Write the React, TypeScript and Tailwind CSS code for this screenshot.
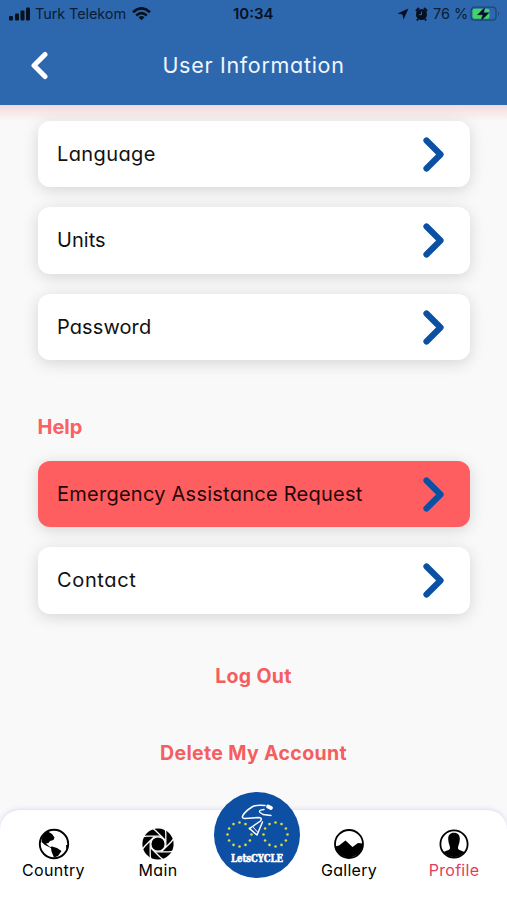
import clsx from 'clsx'
import type { ReactNode } from 'react'

const DOTS = Array.from({ length: 12 }, (_, i) => (i * Math.PI) / 6)
const BLADES = [0, 45, 90, 135, 180, 225, 270, 315]

function StatusBar() {
  return (
    <div className="flex h-7 items-center font-['Inter',sans-serif] text-[14.5px] text-[#0a1c36] [font-feature-settings:normal]">
      <svg className="ml-[9px] shrink-0" width="22" height="14" viewBox="0 0 22 14" fill="#07101f">
        <rect x="0" y="9" width="4" height="4.5" rx="1" />
        <rect x="6" y="6.5" width="4" height="7" rx="1" />
        <rect x="11.5" y="3.5" width="4" height="10" rx="1" />
        <rect x="17" y="0.5" width="4" height="13" rx="1" />
      </svg>
      <span className="ml-[4px] w-[92px] shrink-0 tracking-[-0.1px] whitespace-nowrap">Turk Telekom</span>
      <svg className="ml-[5px] shrink-0" width="19" height="14" viewBox="0 0 19 14" fill="none" stroke="#07101f" strokeWidth="2.6">
        <path d="M1 5.2Q9.5 -2.6 18 5.2" />
        <path d="M4.2 8.5Q9.5 3.8 14.8 8.5" />
        <path d="M6.5 10.2Q9.5 7.7 12.5 10.2L9.5 13.3Z" fill="#07101f" stroke="none" />
      </svg>
      <span className="ml-[82px] w-[41px] shrink-0 text-[15px] font-semibold whitespace-nowrap text-[#07101f]">10:34</span>
      <svg className="ml-[123px] shrink-0" width="12" height="12" viewBox="0 0 12 12" fill="#07101f">
        <path d="M11.5 0.5 6.5 11.5 5.5 6.5 0.5 5.5Z" />
      </svg>
      <svg className="ml-[6px] shrink-0" width="13" height="14" viewBox="0 0 13 14">
        <circle cx="6.5" cy="7.5" r="5.5" fill="#07101f" />
        <path d="M1 4 4 1M12 4 9 1M3 12 2 13.5M10 12l1 1.5" stroke="#07101f" strokeWidth="2" />
        <path d="M6.5 4.5v3.2H4" fill="none" stroke="#2d68ae" />
      </svg>
      <span className="ml-[5px] w-[37px] shrink-0 whitespace-nowrap">76 %</span>
      <svg className="shrink-0" width="30" height="16" viewBox="0 0 30 16">
        <rect x="1" y="1.2" width="25" height="13" rx="3.5" fill="none" stroke="#1d4676" strokeWidth="1.2" />
        <rect x="2.5" y="2.8" width="17" height="10" rx="2" fill="#42d564" />
        <path d="M28 5.5v4.5q2-2.2 0-4.5Z" fill="#1d4676" />
        <path d="M15.5 0.5 7 9h5.5L10.5 15.5 19.5 6.5h-5.7Z" fill="#07101f" stroke="#2d68ae" strokeWidth="0.5" />
      </svg>
    </div>
  )
}

function Row({ label, labelClass, danger }: { label: string; labelClass: string; danger?: boolean }) {
  return (
    <button
      type="button"
      className={clsx(
        'flex h-[66.5px] w-full items-center justify-between rounded-[12px] pr-[26px] pl-[19.5px] shadow-[0_3px_16px_rgba(0,0,0,0.15)]',
        danger ? 'bg-[#ff5e60]' : 'bg-white',
      )}
    >
      <span className={clsx('text-[20px] whitespace-nowrap', danger ? 'text-[#250608]' : 'text-[#111]', labelClass)}>
        {label}
      </span>
      <svg width="22" height="36" viewBox="0 0 22 36" fill="none" stroke="#0b50a3" strokeWidth="6.2" strokeLinecap="round" strokeLinejoin="round">
        <path d="M4.5 4.5 18.5 18.5 4.5 32.5" />
      </svg>
    </button>
  )
}

function GlobeIcon() {
  return (
    <svg width="32" height="32" viewBox="0 0 32 32">
      <circle cx="16" cy="16" r="14.2" fill="white" stroke="black" strokeWidth="1.9" />
      <path d="M4 10Q6 5 10 3.5L14 6 16.5 9.5 15.500 12 12 13 10.500 15 8 15.500 12 19 14 18.500 19 20 23.500 23 20 28 16 29.500 13.500 23.500 13 20 7 17 3.500 14Z" />
      <path d="M28 17 28.5 22 30.5 17Z" />
    </svg>
  )
}

function ApertureIcon() {
  return (
    <svg width="32" height="32" viewBox="-16 -16 32 32">
      <circle r="15.6" />
      {BLADES.map((a) => (
        <path key={a} d="M3.2 -7.8H-11L-17 -7" transform={`rotate(${a})`} fill="none" stroke="white" strokeWidth="1.3" />
      ))}
      <circle r="7.2" stroke="white" strokeWidth="1.3" />
    </svg>
  )
}

function GalleryIcon() {
  return (
    <svg width="32" height="32" viewBox="0 0 32 32">
      <circle cx="16" cy="16" r="14" fill="white" stroke="black" strokeWidth="1.8" />
      <path d="M2 18.5 6 17.5 12.5 12.5 19.5 19 25 15 30 15.5A14.2 14.2 0 0 1 2 18.5Z" />
    </svg>
  )
}

function ProfileIcon() {
  return (
    <svg width="32" height="32" viewBox="0 0 32 32">
      <circle cx="16" cy="16" r="13.6" fill="white" stroke="black" strokeWidth="1.8" />
      <path
        className="text-black"
        fill="currentColor"
        d="M16 4.8c-4.500 0-6.200 3.200-5.700 7.200 0 3.500 1.700 5 1.700 8 0 2-3 2.500-6.500 4A13.500 13.500 0 0 0 26.500 24c-3.500-1.500-6.500-2-6.500-4 0-3 1.700-4.500 1.700-8 .5-4-1.200-7.200-5.700-7.200Z"
      />
    </svg>
  )
}

function Logo() {
  return (
    <svg width="86" height="86" viewBox="0 0 86 86">
      <circle cx="43" cy="43" r="43" fill="#0c4fa3" />
      {[25.5, 61.5].map((cx) =>
        DOTS.map((a) => (
          <circle key={`${cx}-${a}`} cx={cx + Math.sin(a) * 12} cy={42.5 - Math.cos(a) * 12} r="1.3" fill="#d9d94a" />
        )),
      )}
      {/* rider */}
      <g fill="none" stroke="white" strokeLinecap="round" strokeLinejoin="round">
        <path d="M51 13.5Q42 12.500 38 15 30 20 28.5 24.500 28 26.500 31 26.500L44 25.500Q49 25.500 46.500 29L35.500 36.500 43 43 48.500 30" strokeWidth="1.5" />
        <path d="M50 17.5Q44 18 46 20.500L49 22.500 57 23.500" strokeWidth="1.3" />
        <path d="M39 35 43.5 40" strokeWidth="1" />
        <path d="M54 14.5 57 16" strokeWidth="3.8" />
      </g>
      <text
        x="17"
        y="70"
        textLength="52"
        lengthAdjust="spacingAndGlyphs"
        fill="white"
        stroke="white"
        strokeWidth="0.6"
        fontSize="11.5"
        fontWeight="700"
        fontFamily="DejaVu Serif, serif"
      >
        LetsCYCLE
      </text>
    </svg>
  )
}

function Tab({ label, icon, className }: { label: string; icon: ReactNode; className: string }) {
  return (
    <button type="button" className={clsx('flex shrink-0 flex-col items-center pt-[18px]', className)}>
      {icon}
      <span className="text-[16px] leading-5 tracking-[0.3px] whitespace-nowrap">{label}</span>
    </button>
  )
}

export default function App() {
  return (
    <div className="flex h-[900px] w-[507px] flex-col overflow-hidden bg-[#f9f9f9] font-['Inter',sans-serif] [font-feature-settings:'cv11']">
      <header className="h-[104.5px] bg-[#2d68ae]">
        <StatusBar />
        <div className="grid h-[74px] grid-cols-[1fr_auto_1fr] items-center">
          <button type="button" className="ml-[29px] w-5">
            <svg width="20" height="30" viewBox="0 0 20 30" fill="none" stroke="white" strokeWidth="5" strokeLinecap="round" strokeLinejoin="round">
              <path d="M16 4.5 5 15.5 16 26.5" />
            </svg>
          </button>
          <h1 className="text-[21.5px] tracking-[0.7px] text-[#f0f6ff]">User Information</h1>
        </div>
      </header>

      <main className="h-[705.5px] shrink-0">
        <div className="h-[16px] bg-linear-to-b from-[#f4d9da] via-[#f7eaea] to-[#f9f8f8]" />
        <div className="flex flex-col gap-[20px] px-[37.5px]">
          <Row label="Language" labelClass="tracking-[0.4px]" />
          <Row label="Units" labelClass="tracking-[0.05px]" />
          <Row label="Password" labelClass="tracking-[0.1px]" />
        </div>
        <h2 className="mt-[54px] ml-[37.5px] h-[46.5px] text-[20px] leading-[27px] font-bold text-[#fa6064]">Help</h2>
        <div className="flex flex-col gap-[20px] px-[37.5px]">
          <Row label="Emergency Assistance Request" labelClass="tracking-[0.25px]" danger />
          <Row label="Contact" labelClass="tracking-[0.65px]" />
        </div>
        <div className="mt-[48px] flex flex-col items-center gap-[49px] text-[19.5px] leading-7 font-bold tracking-[0.35px] text-[#f45e60]">
          <button type="button">Log Out</button>
          <button type="button">Delete My Account</button>
        </div>
      </main>

      <nav className="flex h-[90px] shrink-0 rounded-t-[20px] bg-white shadow-[0_-1px_5px_rgba(120,120,220,0.22)]">
        <Tab label="Country" icon={<GlobeIcon />} className="w-[107px]" />
        <Tab label="Main" icon={<ApertureIcon />} className="w-[102px]" />
        <button type="button" className="mx-[5px] -mt-[18px] h-[86px] w-[86px] shrink-0">
          <Logo />
        </button>
        <Tab label="Gallery" icon={<GalleryIcon />} className="w-[88px]" />
        <Tab label="Profile" icon={<ProfileIcon />} className="ml-[10px] w-[102px] text-[#e43c5c]" />
      </nav>
    </div>
  )
}
